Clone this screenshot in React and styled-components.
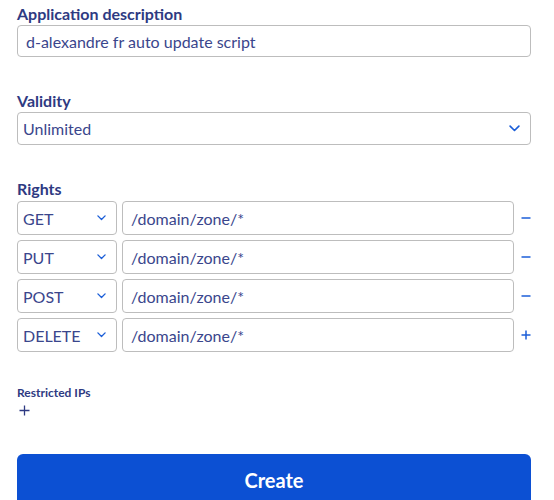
import styled, { createGlobalStyle } from 'styled-components'

const GlobalStyle = createGlobalStyle`
  body {
    margin: 0;
    background: #fff;
    font-family: Lato, "Noto Sans", sans-serif;
    color: #2e3a82;
  }
`

const rights = [
  { method: 'GET', path: '/domain/zone/*', last: false },
  { method: 'PUT', path: '/domain/zone/*', last: false },
  { method: 'POST', path: '/domain/zone/*', last: false },
  { method: 'DELETE', path: '/domain/zone/*', last: true },
]

const Chevron = ({ size = 10 }) => (
  <svg width={size} height={size * 0.6} viewBox="0 0 10 6" fill="none">
    <path d="M1 1l4 4 4-4" stroke="#1b5ed8" strokeWidth="1.5" strokeLinecap="round" strokeLinejoin="round" />
  </svg>
)

const App = () => {
  return (
    <Page>
      <GlobalStyle />
      <Label>Application description</Label>
      <TextBox>d-alexandre fr auto update script</TextBox>

      <Label $top={34}>Validity</Label>
      <SelectBox>
        <span>Unlimited</span>
        <Chevron size={11} />
      </SelectBox>

      <Label $top={34}>Rights</Label>
      <Rows>
        {rights.map((r) => (
          <Row key={r.method}>
            <MethodSelect>
              <span>{r.method}</span>
              <Chevron size={9} />
            </MethodSelect>
            <PathInput>{r.path}</PathInput>
            <IconButton>
              {r.last ? (
                <svg width="10" height="10" viewBox="0 0 10 10">
                  <path d="M5 0.5v9M0.5 5h9" stroke="#1b5ed8" strokeWidth="1.5" />
                </svg>
              ) : (
                <svg width="10" height="10" viewBox="0 0 10 10">
                  <path d="M0.5 5h9" stroke="#1b5ed8" strokeWidth="1.5" />
                </svg>
              )}
            </IconButton>
          </Row>
        ))}
      </Rows>

      <SmallLabel>Restricted IPs</SmallLabel>
      <AddIp>
        <svg width="11" height="11" viewBox="0 0 11 11">
          <path d="M5.5 0.5v10M0.5 5.5h10" stroke="#2e3a82" strokeWidth="1.3" />
        </svg>
      </AddIp>

      <CreateButton>Create</CreateButton>
    </Page>
  )
}

export default App

const Page = styled.div`
  padding: 4px 23px 0 17px;
  display: flex;
  flex-direction: column;
`

const Label = styled.label`
  display: block;
  font-size: 16px;
  font-weight: 700;
  line-height: 20px;
  margin-top: ${(p) => p.$top || 0}px;
  margin-bottom: 1px;
  color: #2e3a82;
`

const SmallLabel = styled.div`
  font-size: 12px;
  font-weight: 700;
  line-height: 16px;
  margin-top: 33px;
  color: #2e3a82;
`

const boxBase = `
  box-sizing: border-box;
  border: 1px solid #bdbdbd;
  border-radius: 4px;
  background: #fff;
  font-size: 16px;
  color: #3a468c;
  display: flex;
  align-items: center;
`

const TextBox = styled.div`
  ${boxBase}
  height: 32px;
  padding: 0 8px;
`

const SelectBox = styled.div`
  ${boxBase}
  height: 33px;
  padding: 0 10px 0 5px;
  justify-content: space-between;
`

const Rows = styled.div`
  display: flex;
  flex-direction: column;
  gap: 5px;
  margin-top: 1px;
`

const Row = styled.div`
  display: flex;
  align-items: center;
  gap: 5px;
`

const MethodSelect = styled.div`
  ${boxBase}
  width: 100px;
  height: 34px;
  padding: 0 10px 0 5px;
  justify-content: space-between;
`

const PathInput = styled.div`
  ${boxBase}
  flex: 1;
  height: 34px;
  padding: 0 8px;
`

const IconButton = styled.div`
  width: 12px;
  display: flex;
  justify-content: flex-end;
  align-items: center;
`

const AddIp = styled.div`
  display: flex;
  padding: 4px 0 0 2px;
`

const CreateButton = styled.button`
  margin-top: 38px;
  height: 52px;
  border: none;
  border-radius: 6px;
  background: #0c50d3;
  color: #fff;
  font-family: Lato, "Noto Sans", sans-serif;
  font-size: 20px;
  font-weight: 700;
`
